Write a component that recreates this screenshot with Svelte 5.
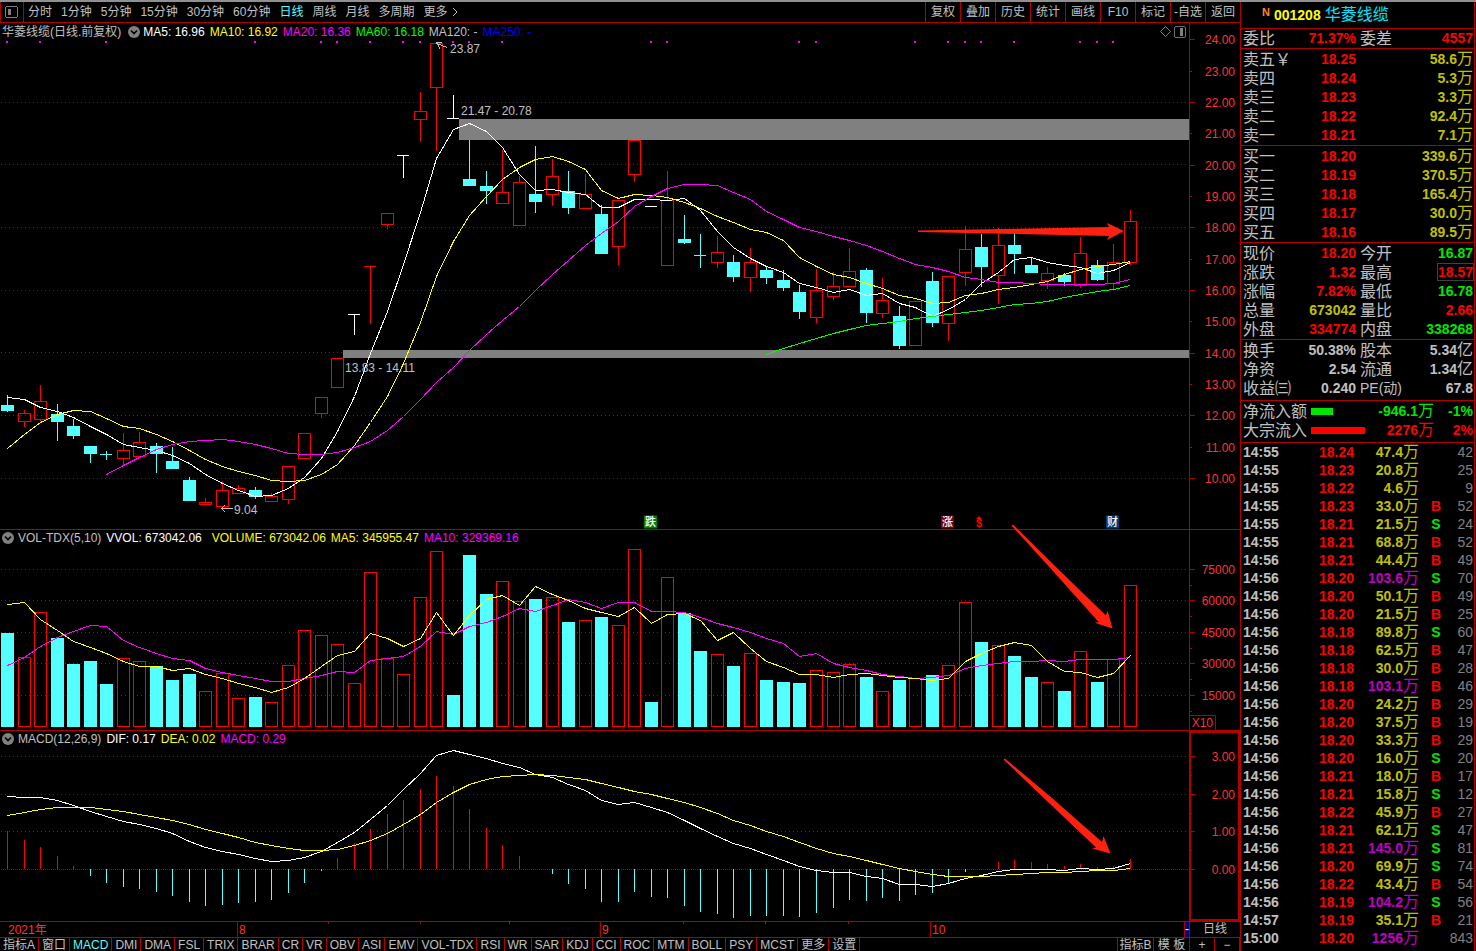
<script>
  const STEP = 16.51;
  const cx = (i) => Math.round(7 + STEP * i);

  // kind, high, body top, body bottom, low
  const candles = [
    ['c',395,405,411,412],['r',410,413,421,427],['r',385,401,419,421],['c',404,414,422,441],['c',419,426,436,439],
    ['c',446,446,454,463],['x',451,454,454,459],['r',433,450,458,465],['r',432,442,456,456],['c',443,446,454,473],
    ['c',447,461,469,469],['c',477,480,501,501],['r',498,502,504,504],['r',481,490,506,506],['r',485,488,493,493],
    ['c',487,490,497,499],['r',493,496,501,501],['r',466,466,499,504],['r',433,433,458,458],['r',397,397,413,418],
    ['r',358,358,387,387],['w',314,314,314,334],['t',266,266,266,323],['r',213,213,224,229],['w',155,155,155,177],
    ['r',92,111,119,142],['r',43,43,87,151],['w',95,118,118,118],['c',140,179,186,186],['c',171,186,191,204],
    ['r',150,192,203,203],['r',176,182,225,225],['c',146,194,202,213],['r',159,176,194,206],['c',171,191,208,214],
    ['r',174,194,208,208],['c',205,214,254,254],['r',200,200,246,265],['r',140,140,174,182],['w',206,206,206,206],
    ['r',171,200,265,265],['c',215,239,243,244],['x',234,255,255,267],['r',236,252,262,268],['c',255,262,277,282],
    ['r',248,262,277,292],['c',267,270,278,284],['c',270,280,288,291],['c',285,292,312,319],['r',269,290,317,323],
    ['r',272,286,296,300],['r',248,271,286,286],['c',268,270,313,323],['r',278,300,313,318],['c',306,316,346,349],
    ['r',301,301,345,345],['c',272,281,323,327],['r',276,276,323,341],['r',226,249,272,286],['c',234,247,267,287],
    ['r',228,245,275,304],['c',233,245,254,274],['c',257,265,273,273],['r',267,273,280,289],['c',273,275,282,286],
    ['r',237,253,285,288],['c',260,265,280,281],['r',244,262,283,289],['r',210,221,262,265]
  ];
  const ma5 = [397,399,407,411,417,426,434,444,447,450,455,463,474,483,490,496,495,488,477,458,431,396,353,311,264,212,158,129,123,131,147,174,190,189,192,194,207,207,199,199,200,198,210,231,247,258,266,272,283,287,292,289,295,293,303,307,316,309,299,283,272,259,257,262,265,267,273,270,262];
  const ma10 = [448,434,422,414,410,411,418,426,428,434,441,450,459,466,471,475,480,481,480,474,464,445,422,396,363,322,276,241,215,196,179,167,159,156,161,169,190,198,194,195,197,202,208,216,222,229,232,240,257,266,274,277,283,288,295,298,303,302,295,293,289,287,284,281,274,269,266,264,261];
  const ma20 = [474,465,457,449,444,441,440,439,441,444,448,453,454,454,452,447,441,430,416,399,382,367,350,334,320,306,290,274,260,245,233,221,206,196,188,184,184,185,192,199,211,219,227,231,236,240,245,251,258,264,267,271,277,279,282,282,283,284,284,284,284,283,279];
  const ma60 = [354,348,343,338,333,329,325,323,321,318,316,314,312,310,307,304,303,301,297,294,291,289,285];
  const volTop = [633,657,612,638,664,661,684,658,661,666,680,674,691,673,698,697,702,665,630,635,644,683,572,658,674,597,551,695,555,594,581,601,599,597,622,620,617,625,549,702,577,613,651,654,666,653,680,682,683,670,672,664,677,691,680,678,675,665,602,642,645,656,677,682,691,651,682,659,585];
  const filledBars = new Set([0,3,4,5,6,9,10,11,15,27,28,29,32,34,36,39,41,42,44,46,47,48,52,54,56,59,61,62,64,66]);
  const vma5 = [604,602,619,630,641,647,653,661,666,666,670,668,674,678,683,687,692,687,678,666,655,651,633,638,646,638,612,635,615,599,595,605,586,594,600,608,612,616,607,623,614,613,620,640,632,648,661,667,674,674,677,674,673,675,677,678,680,678,661,653,646,642,645,661,671,672,677,673,655];
  const vma10 = [665,657,646,637,631,625,626,640,647,653,658,660,668,672,675,678,681,681,678,675,671,672,660,658,656,646,631,634,626,622,616,608,611,605,599,602,608,602,602,611,611,612,617,623,627,632,638,643,656,653,663,667,670,674,676,678,677,675,668,665,663,661,661,660,661,659,659,659,657];
  const hist = [831,840,847,856,866,876,883,887,889,892,896,902,906,905,903,902,900,893,883,871,858,843,829,814,800,789,776,786,809,828,845,856,869,874,884,889,902,902,892,897,898,906,912,914,918,916,916,916,917,913,908,900,901,898,901,895,893,883,872,869,862,860,862,864,866,864,867,866,859];
  const dif = [796,797,797,800,805,811,816,821,824,828,833,841,847,851,854,858,861,860,857,851,842,832,819,805,789,773,755,750,754,758,763,767,774,777,784,790,800,804,802,807,812,820,828,836,843,848,854,860,866,870,872,872,876,878,884,884,886,883,878,875,871,869,869,869,870,868,869,868,863];
  const dea = [815,812,809,807,807,807,809,811,814,817,820,824,829,833,837,842,845,848,850,850,849,845,840,833,824,814,802,792,784,779,776,775,774,775,777,779,783,787,791,794,798,802,807,813,820,825,831,836,842,848,853,856,860,864,868,871,874,876,876,876,875,874,873,872,872,871,870,870,868];
  const signals = [0,2,6,15,19,20,22,24,25,27,28,30,39,40,48,49,55,57,58,59,61,65,66,67];

  const line = (ys, from = 0) => ys.map((y, i) => `${cx(i + from) + 0.5},${y + 0.5}`).join(' ');
  const left = (x) => `left:${(x / 1189) * 100}%`;
  const spot = (x, y) => `left:${(x / 1189) * 100}%;top:${((y - 23) / 506) * 100}%`;

  const priceAxis = Array.from({ length: 15 }, (_, k) => ({ v: (24 - k).toFixed(2), y: Math.round(39.4 + 31.33 * k), major: k % 2 === 0 }));
  const volAxis = [[75000,569],[60000,600],[45000,632],[30000,663],[15000,695]];
  const macdAxis = [['3.00',756],['2.00',794],['1.00',831],['0.00',869]];

  const periods = ['分时','1分钟','5分钟','15分钟','30分钟','60分钟','日线','周线','月线','多周期'];
  const tools = ['复权','叠加','历史','统计','画线','F10','标记','-自选','返回'];
  const tabs = ['指标A','窗口','MACD','DMI','DMA','FSL','TRIX','BRAR','CR','VR','OBV','ASI','EMV','VOL-TDX','RSI','WR','SAR','KDJ','CCI','ROC','MTM','BOLL','PSY','MCST','更多','设置'];

  const asks = [['卖五￥','18.25','58.6'],['卖四','18.24','5.3'],['卖三','18.23','3.3'],['卖二','18.22','92.4'],['卖一','18.21','7.1']];
  const bids = [['买一','18.20','339.6'],['买二','18.19','370.5'],['买三','18.18','165.4'],['买四','18.17','30.0'],['买五','18.16','89.5']];
  const quote = [
    ['现价','18.20','red','今开','16.87','green'],
    ['涨跌','1.32','red','最高','18.57','red boxed'],
    ['涨幅','7.82%','red','最低','16.78','green'],
    ['总量','673042','gold','量比','2.66','red'],
    ['外盘','334774','red','内盘','338268','green']
  ];
  const basics = [
    ['换手','50.38%','股本','5.34','亿'],
    ['净资','2.54','流通','1.34','亿'],
    ['收益㈢','0.240','PE(动)','67.8','']
  ];
  const ticks = `14:55 18.24 47.4 - 42|14:55 18.23 20.8 - 25|14:55 18.22 4.6 - 9|14:55 18.23 33.0 B 52|14:55 18.21 21.5 S 24|14:55 18.21 68.8 B 52|14:56 18.21 44.4 B 49|14:56 18.20 103.6 S 70|14:56 18.20 50.1 B 49|14:56 18.20 21.5 B 25|14:56 18.18 89.8 S 60|14:56 18.18 62.5 B 47|14:56 18.18 30.0 B 28|14:56 18.18 103.1 B 46|14:56 18.20 24.2 B 29|14:56 18.20 37.5 B 19|14:56 18.20 33.3 B 29|14:56 18.20 16.0 S 20|14:56 18.21 18.0 B 17|14:56 18.21 15.8 S 12|14:56 18.22 45.9 B 27|14:56 18.21 62.1 S 47|14:56 18.21 145.0 S 81|14:56 18.20 69.9 S 74|14:56 18.22 43.4 B 54|14:56 18.19 104.2 S 56|14:57 18.19 35.1 B 21|15:00 18.20 1256 - 843`
    .split('|').map((r) => r.split(' '));
</script>

{#snippet fold()}
  <svg class="fold" width="12" height="12" viewBox="0 0 12 12" aria-hidden="true">
    <circle cx="6" cy="6" r="6" fill="#808080" />
    <path d="M3 4.5 6 7.5 9 4.5" fill="none" stroke="#000" stroke-width="1.6" />
  </svg>
{/snippet}

{#snippet grid(ys)}
  {#each ys as y}
    <line x1="1" x2="1189" y1={y + 0.5} y2={y + 0.5} stroke="#b00000" stroke-dasharray="1 3" />
  {/each}
{/snippet}

{#snippet book(rows)}
  <table class="book">
    <tbody>
      {#each rows as [name, price, vol]}
        <tr><th scope="row">{name}</th><td class="red">{price}</td><td class="gold">{vol}<span class="unit">万</span></td></tr>
      {/each}
    </tbody>
  </table>
{/snippet}

<div class="app">
  <main class="charts">
    <nav class="toolbar">
      <button class="layout" aria-label="侧栏">
        <svg width="13" height="12" viewBox="0 0 13 12" shape-rendering="crispEdges">
          <rect x="0.5" y="0.5" width="12" height="11" rx="2" fill="none" stroke="#808080" />
          <rect x="3" y="3" width="3" height="6" fill="#808080" />
        </svg>
      </button>
      <div class="periods">
        {#each periods as p}
          <button class:active={p === '日线'}>{p}</button>
        {/each}
        <button class="more">更多<svg width="6" height="10" viewBox="0 0 6 10"><path d="M1 1 5 5 1 9" fill="none" stroke="#c0c0c0" /></svg></button>
      </div>
      <div class="tools">
        {#each tools as t}
          <button>{t}</button>
        {/each}
      </div>
    </nav>

    <section class="panel">
      <div class="plot">
        <svg class="canvas" viewBox="0 23 1189 506" preserveAspectRatio="none" shape-rendering="crispEdges">
          {@render grid([102, 164, 227, 290, 352, 415, 478])}
          <rect x="459" y="119" width="730" height="21" fill="#808080" />
          <rect x="343" y="350" width="846" height="8" fill="#808080" />
          {#each signals as s}
            <rect x={cx(s) - 1} y="41" width="2" height="2" fill="#f0f" />
          {/each}
          {#each candles as [k, hi, top, bot, lo], i}
            {@const x = cx(i)}
            {#if k === 'r'}
              {#if hi < top}<rect {x} y={hi} width="1" height={top - hi} fill="#f00" />{/if}
              {#if lo > bot}<rect {x} y={bot} width="1" height={lo - bot} fill="#f00" />{/if}
              <rect x={x - 5.5} y={top + 0.5} width="12" height={bot - top} fill="none" stroke="#f00" />
            {:else if k === 'c'}
              <rect {x} y={hi} width="1" height={lo - hi} fill="#54ffff" />
              <rect x={x - 6} y={top} width="13" height={bot - top} fill="#54ffff" />
            {:else}
              {@const c = k === 'w' ? '#fff' : k === 't' ? '#f00' : '#54ffff'}
              <rect {x} y={hi} width="1" height={lo - hi + 1} fill={c} />
              <rect x={x - 6} y={top} width="12" height="1" fill={c} />
            {/if}
          {/each}
          <polyline points={line(ma5)} stroke="#fff" />
          <polyline points={line(ma10)} stroke="#ff0" />
          <polyline points={line(ma20, 6)} stroke="#f0f" />
          <polyline points={line(ma60, 46)} stroke="#0f0" />
          <path d="M447.5 47.500 436.500 43.500M442 42.500H436.500L440 48.500M233 508.500H221.500M225 505 221.500 508.500 225 512" fill="none" stroke="#c0c0c0" />
        </svg>
        <header class="legend">
          <span>华菱线缆(日线.前复权)</span>{@render fold()}
          <span class="tight white">MA5: 16.96</span><span class="yellow">MA10: 16.92</span><span class="magenta">MA20: 16.36</span><span class="lime">MA60: 16.18</span><span>MA120: -</span><span class="blue">MA250: -</span>
          <svg class="marks" width="26" height="12" viewBox="0 0 26 12" aria-hidden="true">
            <path d="M5.500 .5 10.500 5.500 5.500 10.500 .5 5.500Z" fill="none" stroke="#808080" />
            <rect x="14.500" y="0.500" width="11" height="11" rx="1.500" fill="none" stroke="#707070" />
            <rect x="20" y="2" width="3" height="8" fill="#808080" />
          </svg>
        </header>
        <span class="note" style={spot(450, 49)}>23.87</span>
        <span class="note" style={spot(461, 111)}>21.47 - 20.78</span>
        <span class="note" style={spot(345, 368)}>13.83 - 14.11</span>
        <span class="note" style={spot(234, 510)}>9.04</span>
        <span class="badge down" style={spot(644, 522)}>跌</span>
        <span class="badge up" style={spot(941, 522)}>涨</span>
        <span class="cash" style={spot(976, 522)}><svg width="6" height="3" viewBox="0 0 6 3"><path d="M0 3 3 0 6 3Z" fill="#f00" /></svg>$</span>
        <span class="badge fin" style={spot(1106, 522)}>财</span>
      </div>
      <svg class="axis" viewBox="0 23 51 506" preserveAspectRatio="none">
        {#each priceAxis as a}
          <rect x="0" y={a.y} width={a.major ? 6 : 3} height="1" fill="#b00000" />
          <text x="46" y={a.y + 5}>{a.v}</text>
        {/each}
      </svg>
    </section>

    <section class="panel">
      <div class="plot">
        <svg class="canvas" viewBox="0 530 1189 200" preserveAspectRatio="none" shape-rendering="crispEdges">
          {@render grid(volAxis.map((a) => a[1]))}
          {#each volTop as y, i}
            {#if filledBars.has(i)}
              <rect x={cx(i) - 6} {y} width="13" height={727 - y} fill="#54ffff" />
            {:else}
              <rect x={cx(i) - 5.5} y={y + 0.5} width="12" height={726 - y} fill="none" stroke="#f00" />
            {/if}
          {/each}
          <polyline points={line(vma10)} stroke="#f0f" />
          <polyline points={line(vma5)} stroke="#ff0" />
        </svg>
        <header class="legend sub">
          {@render fold()}<span>VOL-TDX(5,10)</span><span class="white wide">VVOL: 673042.06</span><span class="yellow">VOLUME: 673042.06</span><span class="yellow">MA5: 345955.47</span><span class="magenta">MA10: 329369.16</span>
        </header>
      </div>
      <svg class="axis" viewBox="0 530 51 200" preserveAspectRatio="none">
        {#each volAxis as [v, y]}
          <rect x="0" {y} width="6" height="1" fill="#b00000" />
          <rect x="0" y={y + 16} width="3" height="1" fill="#b00000" />
          <text x="46" y={y + 5}>{v}</text>
        {/each}
        <path d="M0 715.500H26.500V730" fill="none" stroke="#b00000" />
        <text x="24" y="727">X10</text>
      </svg>
    </section>

    <section class="panel">
      <div class="plot">
        <svg class="canvas" viewBox="0 731 1189 190" preserveAspectRatio="none" shape-rendering="crispEdges">
          {@render grid([756, 794, 831])}
          <line x1="1" x2="1189" y1="869.5" y2="869.5" stroke="#b00000" stroke-dasharray="1 1" />
          {#each hist as y, i}
            {#if y < 869}
              <rect x={cx(i)} {y} width="1" height={869 - y} fill="#f00" />
            {:else if y > 869}
              <rect x={cx(i)} y="869" width="1" height={y - 869} fill="#54ffff" />
            {/if}
          {/each}
          <polyline points={line(dif)} stroke="#fff" />
          <polyline points={line(dea)} stroke="#ff0" />
        </svg>
        <header class="legend sub">
          {@render fold()}<span>MACD(12,26,9)</span><span class="white">DIF: 0.17</span><span class="yellow">DEA: 0.02</span><span class="magenta">MACD: 0.29</span>
        </header>
      </div>
      <svg class="axis selected" viewBox="0 731 51 190" preserveAspectRatio="none">
        {#each macdAxis as [v, y], i}
          <rect x="0" {y} width="6" height="1" fill="#b00000" />
          {#if i < 3}<rect x="0" y={y + 19} width="3" height="1" fill="#b00000" />{/if}
          <text x="46" y={y + 5}>{v}</text>
        {/each}
      </svg>
    </section>

    <footer class="dates">
      <div class="plot">
        <span class="date first" style={left(4)}>2021年</span>
        <span class="date" style={left(237)}>8</span>
        <span class="date" style={left(600)}>9</span>
        <span class="date" style={left(930)}>10</span>
        {#each [328, 420, 509, 683, 765, 848] as x}<i class="week" style={left(x)}></i>{/each}
        <b class="handle">-</b>
      </div>
      <div class="unit-name">日线</div>
    </footer>

    <nav class="tabs">
      {#each tabs as t}
        <button class:active={t === 'MACD'}>{t}</button>
      {/each}
      <span class="spacer"></span>
      <button class="end">指标B</button><button class="end">模 板</button><button class="zoom">+</button><button class="zoom">−</button>
    </nav>

    <svg class="arrows" viewBox="0 23 1240 899" preserveAspectRatio="none" aria-hidden="true">
      <path d="M918 230.500 1109 227 1107 223 1124 231 1107 240 1109 236 918 232Z" />
      <path d="M1013 524.500 1056 567 1105.700 615.300 1107.700 611 1112.500 628.500 1094.700 622.700 1098.700 622 1052 570 1011.500 525.500Z" />
      <path d="M1005 758.500 1052 798 1102 842 1103.500 836 1110.500 853.500 1092 848.500 1096 847.500 1048 802 1003.500 759.500Z" />
    </svg>
  </main>

  <aside class="side">
    <h1><sup>N</sup><b>001208</b><span>华菱线缆</span></h1>
    <div class="block ratio">
      <table class="pairs"><tbody><tr><th scope="row">委比</th><td class="red">71.37%</td><th scope="row" class="second">委差</th><td class="red">4557</td></tr></tbody></table>
    </div>
    <div class="block">{@render book(asks)}</div>
    <div class="block">{@render book(bids)}</div>
    <div class="block">
      <table class="pairs"><tbody>
        {#each quote as [a, av, ac, b, bv, bc]}
          <tr><th scope="row">{a}</th><td class={ac}>{av}</td><th scope="row" class="second">{b}</th><td class={bc}><span>{bv}</span></td></tr>
        {/each}
      </tbody></table>
    </div>
    <div class="block loose">
      <table class="pairs"><tbody>
        {#each basics as [a, av, b, bv, u]}
          <tr><th scope="row">{a}</th><td>{av}</td><th scope="row" class="second" class:latin={b.startsWith('PE')}>{b}</th><td>{bv}<span class="unit">{u}</span></td></tr>
        {/each}
      </tbody></table>
    </div>
    <div class="block loose">
      <table class="flow"><tbody>
        <tr class="green"><th scope="row">净流入额</th><td><i class="bar" style="width:22px"></i></td><td>-946.1<span class="unit">万</span></td><td>-1%</td></tr>
        <tr class="red"><th scope="row">大宗流入</th><td><i class="bar" style="width:54px"></i></td><td>2276<span class="unit">万</span></td><td>2%</td></tr>
      </tbody></table>
    </div>
    <table class="ticks"><tbody>
      {#each ticks as [t, p, v, d, n]}
        <tr>
          <td>{t}</td><td class="red">{p}</td>
          <td class={+v > 100 ? 'purple' : 'gold'}>{v}<span class="unit">万</span></td>
          <td class={d === 'B' ? 'red' : 'green'}>{d === '-' ? '' : d}</td><td>{n}</td>
        </tr>
      {/each}
    </tbody></table>
  </aside>
</div>

<style>
  :global(body) { margin: 0; background: #000; }
  .app {
    display: grid; grid-template-columns: minmax(0, 1fr) 236px; height: 100vh; min-height: 700px;
    box-sizing: border-box; border-top: 2px solid #909090; overflow: hidden;
    background: #000; color: #c0c0c0; font: 12px/16px "Liberation Sans", "Noto Sans CJK SC", sans-serif;
  }
  button { margin: 0; padding: 0; border: 0; background: none; color: inherit; font: inherit; white-space: nowrap; cursor: pointer; }
  svg { display: block; }
  .charts { position: relative; display: grid; grid-template-rows: 21px 507fr 201fr 191fr 16px 13px; min-width: 0; min-height: 0; }
  .toolbar { display: flex; border-bottom: 1px solid #b00000; }
  .layout { width: 24px; padding-left: 4px; border-left: 1px solid #b00000; border-right: 1px solid #b00000; box-sizing: border-box; }
  .periods { display: flex; gap: 9px; padding-left: 4px; }
  .more { display: flex; align-items: center; gap: 4px; }
  .active { color: #54ffff; }
  .tools { display: flex; margin-left: auto; }
  .tools button { width: 35px; border-left: 1px solid #b00000; box-sizing: border-box; }
  .panel { display: grid; grid-template-columns: minmax(0, 1fr) 51px; min-height: 0; border-bottom: 1px solid #b00000; }
  .plot { position: relative; min-width: 0; min-height: 0; }
  .canvas { position: absolute; inset: 0; width: 100%; height: 100%; }
  polyline { fill: none; }
  .axis { width: 51px; height: 100%; overflow: hidden; min-height: 0; box-shadow: inset 1px 0 0 #b00000; }
  .axis text { fill: #ff3232; font-size: 12px; text-anchor: end; }
  .selected { box-shadow: inset 0 0 0 2px #b00000; }
  .legend { position: relative; display: flex; align-items: center; gap: 5px; height: 18px; padding-left: 2px; white-space: nowrap; }
  .sub { height: 16px; }
  .legend .tight { margin-left: -2px; }
  .legend .wide { margin-right: 5px; }
  .fold { flex: none; margin-left: 2px; }
  .sub .fold { margin: 0 -1px 0 0; }
  .marks { margin-left: auto; margin-right: 3px; overflow: visible; }
  .white { color: #fff; } .yellow { color: #ff0; } .magenta { color: #f0f; } .lime { color: #0f0; } .blue { color: #00f; }
  .note, .badge, .cash { position: absolute; transform: translateY(-50%); white-space: nowrap; }
  .badge { width: 13px; height: 13px; color: #fff; font-size: 11px; line-height: 13px; text-align: center; font-weight: 500; }
  .down { background: #008000; } .up { background: #800000; } .fin { background: #003c78; }
  .cash { color: #f00; font-size: 11px; font-weight: bold; line-height: 9px; }
  .dates { display: grid; grid-template-columns: minmax(0, 1fr) 51px; border-bottom: 1px solid #b00000; color: #ff3232; }
  .date, .week, .handle { position: absolute; top: 0; }
  .date { height: 15px; padding-left: 1px; border-left: 1px solid #b00000; }
  .first { border: 0; padding-left: 4px; }
  .week { width: 1px; height: 2px; background: #b00000; }
  .handle { right: 0; width: 4px; height: 15px; background: #000080; color: #fff; line-height: 15px; font-weight: normal; text-align: center; border-left: 1px solid #b00000; }
  .unit-name { color: #c0c0c0; text-align: center; line-height: 15px; border-left: 1px solid #b00000; }
  .tabs { display: flex; overflow: hidden; min-width: 0; }
  .tabs button { padding: 0 3px; border-right: 1px solid #b00000; line-height: 15px; flex: none; height: 13px; overflow: hidden; }
  .spacer { flex: 1; border-right: 1px solid #b00000; }
  .tabs .end { width: 36px; padding: 0; box-sizing: border-box; }
  .tabs .zoom { width: 25px; padding: 0; box-sizing: border-box; }
  .arrows { position: absolute; left: 0; top: 21px; width: 100%; height: calc(100% - 50px); pointer-events: none; }
  .arrows path { fill: #ff2010; }

  .side { border-left: 1px solid #b00000; border-right: 1px solid #b00000; margin-right: 1px; min-width: 0; font-size: 14px; }
  h1 { display: flex; align-items: center; gap: 4px; height: 26px; margin: 0; padding-left: 21px; border-bottom: 1px solid #b00000; font-size: 14px; line-height: 20px; font-weight: normal; }
  h1 sup { align-self: flex-start; color: #ff8040; font-size: 11px; line-height: 20px; font-weight: bold; vertical-align: baseline; }
  h1 b { color: #ff0; }
  h1 span { color: #00e4ff; font-size: 16px; }
  .block { padding: 1px 1px 0 2px; border-bottom: 1px solid #b00000; }
  .ratio { padding-top: 0; }
  .loose { padding-bottom: 2px; }
  table { width: 100%; border-collapse: collapse; table-layout: fixed; }
  th, td { height: 19px; padding: 0; line-height: 19px; white-space: nowrap; }
  th { color: #c0c0c0; font-size: 16px; font-weight: 400; text-align: left; width: 42px; }
  td { font-weight: bold; text-align: right; }
  .unit { font-size: 16px; font-weight: 400; line-height: 1; }
  .book td:nth-child(2) { width: 71px; }
  .pairs td:nth-child(2) { width: 71px; }
  .pairs .second { padding-left: 4px; width: 42px; }
  .pairs .latin { font-size: 14px; }
  .flow th { width: 68px; }
  .flow td:nth-child(2) { width: 54px; }
  .flow td:nth-child(3) { width: 69px; }
  .bar { display: block; height: 7px; background: currentColor; }
  .boxed span { box-shadow: 0 0 0 1px #404040; }
  .red { color: #f00; } .green { color: #00e600; } .gold { color: #c0c000; } .purple { color: #c000c0; }
  .ticks { margin-left: 2px; width: calc(100% - 3px); }
  .ticks td { height: 18px; line-height: 18px; }
  .ticks td:nth-child(1) { width: 40px; text-align: left; }
  .ticks td:nth-child(2) { width: 71px; }
  .ticks td:nth-child(3) { width: 65px; }
  .ticks td:nth-child(4) { width: 34px; text-align: center; }
  .ticks td:nth-child(5) { color: #808080; font-weight: normal; direction: rtl; }
</style>
